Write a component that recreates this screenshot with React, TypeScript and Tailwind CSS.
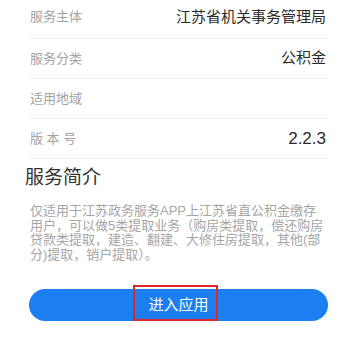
const rows = [
  { label: "服务主体", value: "江苏省机关事务管理局" },
  { label: "服务分类", value: "公积金" },
  { label: "适用地域", value: "" },
  { label: "版 本 号", value: "2.2.3" },
];

export default function App() {
  return (
    <div
      className="w-[341px] h-[347px] overflow-hidden bg-white"
      style={{ fontFamily: '"Liberation Sans", "Noto Sans CJK SC", sans-serif' }}
    >
      <div className="ml-[29px] mr-[13px]">
        {/* Info rows */}
        {rows.map((row, i) => (
          <div
            key={row.label}
            className={`flex items-center justify-between border-b border-[#efefef] pr-[2px] ${
              i === 0 ? "h-[39px] pb-[4px]" : "h-[40px]"
            }`}
          >
            <span className="text-[13px] text-[#a3a3a3] pl-[1px]">{row.label}</span>
            <span className={`text-[#2b2b2b] ${row.value === "2.2.3" ? "text-[17px]" : "text-[15px]"}`}>
              {row.value}
            </span>
          </div>
        ))}

        {/* Description */}
        <h2 className="-ml-[4px] mt-[7px] text-[19px] leading-[24px] text-[#333333]">服务简介</h2>
        <p className="mt-[14px] pl-[1px] pr-[2px] text-[13px] leading-[14.5px] text-[#a6a6a6]">
          仅适用于江苏政务服务APP上江苏省直公积金缴存用户，可以做5类提取业务（购房类提取，偿还购房贷款类提取，建造、翻建、大修住房提取，其他(部分)提取，销户提取）。
        </p>

        {/* Action */}
        <button className="relative mt-[27px] flex h-[32px] w-full items-center justify-center rounded-full bg-[#1b7ff2] text-[15px] text-white">
          进入应用
          <span className="absolute left-[104px] top-[-4px] h-[36px] w-[85px] border-2 border-[#e3262a]" />
        </button>
      </div>
    </div>
  );
}
